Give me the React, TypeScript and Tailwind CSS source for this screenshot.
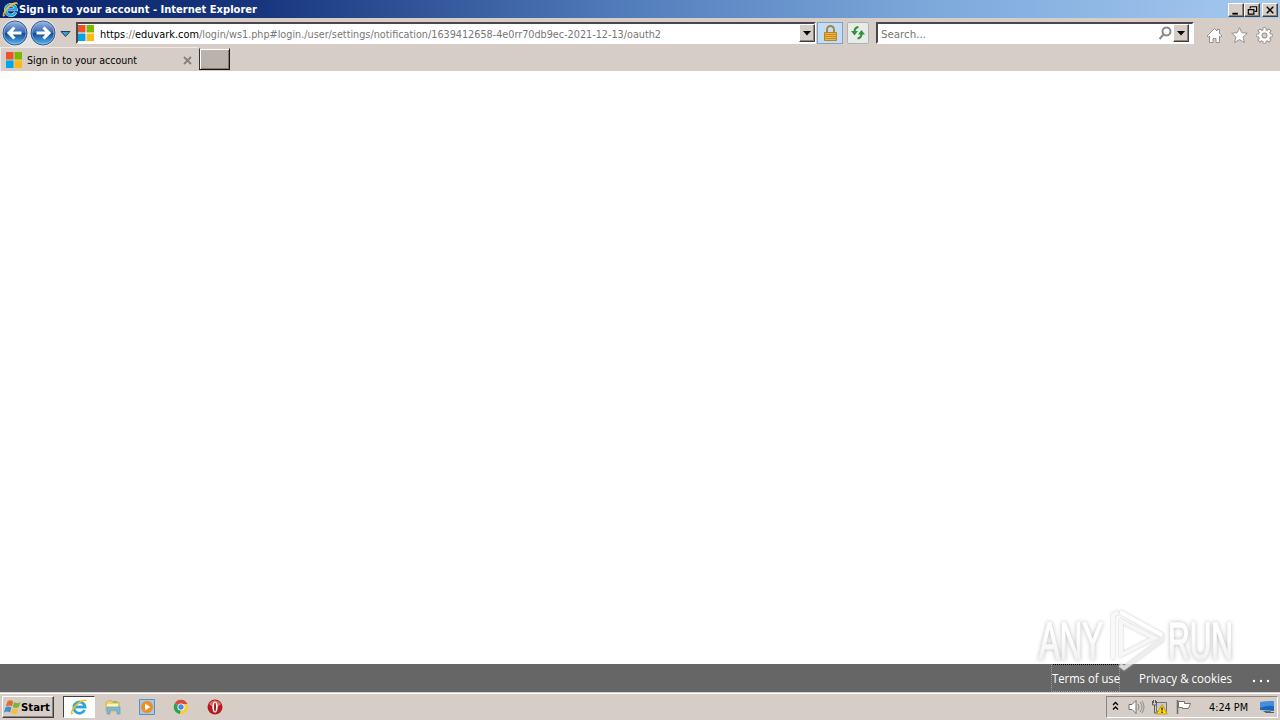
import type { ReactNode } from "react";

const tahoma = "font-['DejaVu_Sans'] [font-stretch:condensed]";
const raised = "border border-t-white border-l-white border-r-[#404040] border-b-[#404040] bg-[#d6cec6] shadow-[inset_-1px_-1px_0_#8b8580]";

export default function App() {
  return (
    <div className={`relative flex h-[720px] w-[1280px] flex-col overflow-hidden bg-white text-[11px] text-black ${tahoma}`}>
      <TitleBar />
      <NavBar />
      <TabBar />
      <main className="flex-1 bg-white" />
      <PageFooter />
      <TaskBar />
      <Watermark />
    </div>
  );
}

function TitleBar() {
  return (
    <header className="flex h-[18px] shrink-0 items-center bg-[linear-gradient(90deg,#0a246a_0%,#17357d_20%,#547fbd_50%,#7ba7da_72%,#a6caf0_100%)] pl-[2px] pr-[2px] text-white">
      <IeIcon size={17} />
      <Label width={238} className="h-[18px] font-bold">Sign in to your account - Internet Explorer</Label>
      <div className="ml-auto flex pt-px">
        <WindowButton><path d="M3 9.5h6v2H3z" fill="#000" /></WindowButton>
        <WindowButton>
          <path d="M5 3h7v5h-2M5 3v2M3 6h6v5H3z" fill="none" stroke="#000" strokeWidth="1.3" />
        </WindowButton>
        <div className="w-[2px]" />
        <WindowButton><path d="M3.5 3l7 7M10.5 3l-7 7" stroke="#000" strokeWidth="1.7" /></WindowButton>
      </div>
    </header>
  );
}

function WindowButton({ children }: { children: ReactNode }) {
  return (
    <button className={`flex h-[14px] w-4 items-center justify-center ${raised}`}>
      <svg width="14" height="12" viewBox="0 0 14 13">{children}</svg>
    </button>
  );
}

// Text run stretched to a fixed advance so it keeps the width of the system font
function Label({ width, className = "", y = 13, size = 11, children }: { width: number; className?: string; y?: number; size?: number; children: ReactNode }) {
  return (
    <svg width={width} height="18" className={`shrink-0 overflow-visible ${className}`}>
      <text x="0" y={y} fontSize={size} fill="currentColor" textLength={width} lengthAdjust="spacingAndGlyphs">{children}</text>
    </svg>
  );
}

function NavBar() {
  return (
    <nav className="flex h-[29px] shrink-0 items-start bg-[#d6cec6]">
      <div className="ml-[2px] mt-px flex h-[28px] w-[54px] items-center justify-between rounded-full bg-[#e6e2df]">
        <ArrowButton />
        <ArrowButton forward />
      </div>
      <svg className="ml-[4px] mt-[12px]" width="11" height="8"><path d="M1 1.5h9L5.5 6.5z" fill="#4b9bc9" stroke="#164362" /></svg>
      <div className="ml-[5px] mt-[4px] flex h-[22px] w-[740px] border-2 border-t-[#4b454d] border-l-[#4b454d] border-r-white border-b-white bg-white">
        <div className="mt-px"><MsLogo /></div>
        <div className="ml-[6px] flex">
          <Label width={99} y={14}>https<tspan fill="#777">://</tspan>eduvark.com</Label>
          <Label width={462} y={14} className="text-[#777]">/login/ws1.php#login./user/settings/notification/1639412658-4e0rr70db9ec-2021-12-13/oauth2</Label>
        </div>
        <DropButton />
      </div>
      <div className="ml-[1px] mt-[4px] flex h-[22px] w-[26px] items-center justify-center border border-[#7da2ce] bg-[#c4dcf4]">
        <LockIcon />
      </div>
      <div className="ml-[4px] mt-[4px] flex h-[22px] w-[22px] items-center justify-center rounded-xs border border-[#b0b3b5] bg-[#e9ebe8]">
        <svg width="16" height="16" viewBox="0 0 16 16" fill="none" stroke="#34903b" strokeWidth="2">
          <path d="M8.5 2Q4.5 2.5 4.5 7M7.5 13.5q4-.5 4-5" />
          <path d="M1 6h7L4.5 10.5zM8 9.5h7L11.5 5z" fill="#34903b" stroke="none" />
        </svg>
      </div>
      <div className="ml-[7px] mt-[4px] flex h-[22px] w-[318px] border-2 border-t-[#4b454d] border-l-[#4b454d] border-r-white border-b-white bg-white pl-[3px]">
        <Label width={45} y={14} className="text-[#777]">Search...</Label>
        <svg className="ml-auto mt-[2px]" width="15" height="15" fill="none" stroke="#888" strokeWidth="2">
          <circle cx="8.5" cy="5.5" r="4" /><path d="M5.5 8.5L1.5 13" />
        </svg>
        <DropButton search />
        <div className="w-[3px]" />
      </div>
      <div className="ml-[12px] mt-[9px] flex gap-[8px]">
        <HomeIcon />
        <svg width="17" height="17"><path d="M8.5 .7l2.3 5 5.5.5-4.2 3.7 1.3 5.6-4.9-2.9-4.9 2.9 1.3-5.6L.7 6.2l5.5-.5z" fill="#fff" stroke="#96928f" /></svg>
        <GearIcon />
      </div>
    </nav>
  );
}

function ArrowButton({ forward = false }: { forward?: boolean }) {
  const id = forward ? "fwd" : "back";
  return (
    <svg width="26" height="26" viewBox="0 0 26 26">
      <defs>
        <linearGradient id={id} x2="0" y2="1">
          <stop offset="0" stopColor="#9cb7df" /><stop offset=".48" stopColor="#3568b5" />
          <stop offset=".52" stopColor="#144994" /><stop offset="1" stopColor="#58bdf4" />
        </linearGradient>
      </defs>
      <circle cx="13" cy="13" r="12" fill={`url(#${id})`} stroke="#375786" />
      <circle cx="13" cy="13" r="11" fill="none" stroke="#9fc4ee" strokeOpacity=".6" />
      <path transform={forward ? "translate(26 0) scale(-1 1)" : undefined} d="M19.5 13H8M12.5 7.5L7 13l5.5 5.5" fill="none" stroke="#fff" strokeWidth="3" />
    </svg>
  );
}

function DropButton({ search = false }: { search?: boolean }) {
  return (
    <button className={`flex h-[18px] w-4 items-center justify-center ${raised} ${search ? "" : "ml-auto -mr-px"}`}>
      <svg width="8" height="5"><path d="M0 0h8L4 4.5z" /></svg>
    </button>
  );
}

function TabBar() {
  return (
    <div className="flex h-6 shrink-0 bg-[#d6cec6]">
      <div className="flex h-6 w-[198px] border-t border-l border-[#eeeae6] pl-[5px] pt-[4px]">
        <MsLogo />
        <Label width={110} className="ml-[5px]" y={12}>Sign in to your account</Label>
        <svg className="ml-auto mr-[6px] mt-[4px]" width="9" height="9" stroke="#85807c" strokeWidth="1.8"><path d="M1 1l7 7M8 1L1 8" /></svg>
      </div>
      <div className="ml-px mt-px h-[22px] w-[31px] border border-t-[#d6cec6] border-l-[#343030] border-r-[#151313] border-b-[#151313] bg-[#bcb2ac] shadow-[inset_1px_1px_0_white,inset_-1px_-1px_0_#817a76]" />
    </div>
  );
}

function PageFooter() {
  return (
    <footer className="flex h-7 shrink-0 justify-end bg-[#666] font-['Open_Sans'] [font-stretch:normal] text-white">
      <div className="h-7 w-[69px] border border-dotted border-[#999] border-t-black pt-[5px]">
        <Label width={68} size={12} y={13}>Terms of use</Label>
      </div>
      <div className="ml-[19px] pt-[6px]"><Label width={93} size={12} y={13}>Privacy &amp; cookies</Label></div>
      <svg className="ml-[20px] mr-[10px] mt-[15px]" width="18" height="4" fill="#fff"><circle cx="2" cy="2" r="1.2" /><circle cx="9" cy="2" r="1.2" /><circle cx="16" cy="2" r="1.2" /></svg>
    </footer>
  );
}

function TaskBar() {
  return (
    <div className="flex h-7 shrink-0 border-t border-[#d6cec6] bg-[#d6cec6] shadow-[inset_0_1px_0_white]">
      <button className={`ml-[2px] mt-[3px] flex h-[22px] w-[52px] items-center pl-px ${raised}`}>
        <svg width="17" height="16" viewBox="0 0 17 16">
          <path d="M3.5 2.5c2-1.8 4-1.3 5.7 0L7.8 7.5c-2-1.4-4-1.3-6 0z" fill="#e56a2c" />
          <path d="M10 3c2 1.2 4 1.3 6.5 0l-1.6 5c-2 1.2-4 1.2-6.2 0z" fill="#79b63f" />
          <path d="M1.3 8.7c2-1.5 4-1.4 6.1 0L6 13.6c-2-1.5-4-1.4-6 0z" fill="#3d8ed1" />
          <path d="M8.4 9.2c2 1.2 4 1.2 6.1 0L13 14.3c-2 1.2-4 1.2-6 0z" fill="#f2c13c" />
        </svg>
        <Label width={29} className="font-bold">Start</Label>
      </button>
      <div className="ml-[9px] mt-[3px] flex h-[22px] w-[32px] items-center justify-center border border-t-[#404040] border-l-[#404040] border-r-white border-b-white bg-white">
        <IeIcon size={18} />
      </div>
      <div className="ml-[10px] flex items-center gap-[18px] pt-px">
        <FolderIcon />
        <svg width="16" height="16"><path d="M.5.5h15v15H.5z" fill="#a4c8ea" stroke="#5a91c5" /><circle cx="8" cy="8" r="6" fill="#f18c1d" /><path d="M6 4.5v7L11.5 8z" fill="#fff" /></svg>
        <ChromeIcon />
        <svg width="16" height="16"><circle cx="8" cy="8" r="7.5" fill="#b7191f" /><path d="M2 5a7 7 0 0112 0L12 7H4z" fill="#dc6866" /><ellipse cx="8" cy="8" rx="2.7" ry="5.5" fill="#fff" /><ellipse cx="8" cy="8" rx="1" ry="4.5" fill="#a51b21" /></svg>
      </div>
      <Tray />
    </div>
  );
}

function Tray() {
  return (
    <div className="ml-auto mr-[2px] mt-[3px] flex h-[22px] w-[172px] items-center border border-t-[#8b8580] border-l-[#8b8580] border-r-white border-b-white pl-[5px]">
      <svg width="7" height="10" className="-mt-[2px]" fill="none" stroke="#000" strokeWidth="1.3"><path d="M1 4l2.5-2.5L6 4M1 8.5L3.5 6 6 8.5" /></svg>
      <svg className="ml-[9px]" width="17" height="16" fill="none" stroke="#77716c"><path d="M1 5.5h3l4-4v13l-4-4H1z" fill="#fff" /><path d="M10 5q2 3 0 6M12 3q4 5 0 10M14 2q4 6 0 12" stroke="#928c87" /></svg>
      <svg className="ml-[6px]" width="18" height="16"><path d="M5.5 3.5h10v9h-10z" fill="#c9c8c4" stroke="#77716c" /><path d="M1.5 2v4h4V2M3.5 6v8h5M2.5 1v3M4.5 1v3" fill="none" stroke="#5d5a58" /><path d="M11 5.5L16.3 15H5.7z" fill="#ffd900" stroke="#b98d00" strokeWidth=".7" /><path d="M11 8.5v3M11 12.5V14" stroke="#292000" strokeWidth="1.4" /></svg>
      <svg className="ml-[6px]" width="17" height="16"><path d="M2.5 1v14" stroke="#77716c" strokeWidth="1.6" /><path d="M3.5 2.5h6v2h6l-2 5h-6v-1h-4z" fill="#fff" stroke="#77716c" /></svg>
      <Label width={39} className="ml-[17px]">4:24 PM</Label>
      <svg className="ml-[11px]" width="16" height="16"><path d="M1 3l14-1v10L1 11z" fill="#1767bd" /><path d="M1 3l14-1v5Q7 6 1 9z" fill="#468fdb" /><path d="M4 12.3l11 .2v1.3H7z" fill="#25364b" /></svg>
    </div>
  );
}

function MsLogo() {
  return <svg className="shrink-0" width="16" height="16"><path d="M0 0h7.5v7.5H0z" fill="#ef512b" /><path d="M8.5 0H16v7.5H8.5z" fill="#7ab900" /><path d="M0 8.5h7.5V16H0z" fill="#00a5e8" /><path d="M8.5 8.5H16V16H8.5z" fill="#fdb813" /></svg>;
}

function IeIcon({ size }: { size: number }) {
  return (
    <svg width={size} height={size} viewBox="0 0 18 18" fill="none">
      <path d="M14.5 12A5.6 5.6 0 1 1 15 9H5" stroke="#c4eafc" strokeWidth="3.6" />
      <path d="M14.5 12A5.6 5.6 0 1 1 15 9H5" stroke="#29a3df" strokeWidth="2.5" />
      <path d="M4 14.5C-.5 20-.5 13 5 7S18-.8 16.5 4.7C16.5.7 9 5 5.3 9.5S1.8 16 4 14.5z" fill="#f3bd26" />
    </svg>
  );
}

function LockIcon() {
  return <svg width="15" height="17"><path d="M4 8V4.5a3.5 3.5 0 017 0V8" fill="none" stroke="#a5883e" strokeWidth="2" /><path d="M1.5 7.5h12v8h-12z" fill="#efb63c" stroke="#b5842a" /><path d="M2 9.5h11M2 11.5h11M2 13.5h11" stroke="#c48d2c" /></svg>;
}

function HomeIcon() {
  return <svg width="17" height="17"><path d="M1 9L8.5 1.5 11 4V2.5h2.5v4L16 9l-1.3 1-1.2-1v6.5h-3.5v-4H7v4H3.5V9l-1.2 1z" fill="#fff" stroke="#96928f" /></svg>;
}

const teeth = [0, 45, 90, 135, 180, 225, 270, 315];

function GearIcon() {
  return (
    <svg width="17" height="17" fill="none">
      {teeth.map((angle) => (
        <path key={angle} d="M7 4V.8h3V4" transform={`rotate(${angle} 8.5 8.5)`} fill="#fff" stroke="#96928f" />
      ))}
      <circle cx="8.5" cy="8.5" r="4.3" stroke="#96928f" strokeWidth="4.4" />
      <circle cx="8.5" cy="8.5" r="4.3" stroke="#fff" strokeWidth="2.6" />
      {teeth.map((angle) => (
        <path key={angle} d="M7.5 4V1.5h2V4" transform={`rotate(${angle} 8.5 8.5)`} fill="#fff" />
      ))}
    </svg>
  );
}

function FolderIcon() {
  return <svg width="16" height="16"><path d="M1 3l5-2 1 2h7v9H1z" fill="#efd477" stroke="#c3a64c" strokeWidth=".7" /><path d="M2 5h11v5H2z" fill="#fff3b0" /><path d="M2 8h13v7h-3v-4H5v4H2z" fill="#7ebbdc" stroke="#5790b6" strokeWidth=".6" /><path d="M8 3h4" stroke="#6ca84e" /></svg>;
}

function ChromeIcon() {
  return <svg width="16" height="16"><circle cx="8" cy="8" r="7.2" fill="#f8cc3a" /><path d="M8 8L1.8 4.2A7.2 7.2 0 0114.4 5H8z" fill="#dc493b" /><path d="M1.8 4.2L8 8l-1 7.1A7.2 7.2 0 011.8 4.2z" fill="#29a15a" /><circle cx="8" cy="8" r="3.6" fill="#fff" /><circle cx="8" cy="8" r="2.7" fill="#4589ec" /></svg>;
}

function Watermark() {
  return (
    <svg className="pointer-events-none absolute left-[1030px] top-[604px] overflow-visible font-['Liberation_Sans'] [font-stretch:normal]" width="220" height="74">
      <defs>
        <linearGradient id="mark" x2="0" y2="1"><stop offset=".4" stopColor="#fff" /><stop offset="1" stopColor="#ebebeb" /></linearGradient>
      </defs>
      <g className="drop-shadow-[0_0_2px_#bbb]" fill="url(#mark)" stroke="url(#mark)" strokeWidth="1.5" fontSize="51">
        <text x="9" y="55" textLength="64" lengthAdjust="spacingAndGlyphs">ANY</text>
        <text x="138" y="55" textLength="65" lengthAdjust="spacingAndGlyphs">RUN</text>
      </g>
      <g className="drop-shadow-[0_0_1px_#bbb]" fill="none" strokeWidth="4" opacity=".85">
        <path d="M83 55V11l5-3" stroke="#f8f8f8" />
        <path d="M91 17l33 17-33 17z" stroke="#f6f6f6" />
        <path d="M90 8l42 23v5L94 64l-4-3" stroke="#ececec" />
        <path d="M90 8l42 23" stroke="#fff" />
      </g>
    </svg>
  );
}
